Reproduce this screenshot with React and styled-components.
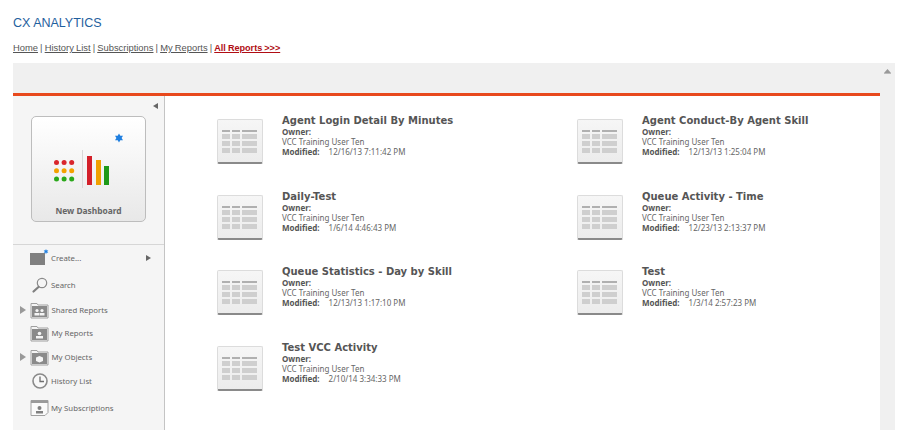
import React from "react";
import styled, { createGlobalStyle } from "styled-components";

const Global = createGlobalStyle`
  html, body { margin: 0; padding: 0; background: #fff; height: 430px; overflow: hidden; }
  #root { height: 430px; }
`;

const Page = styled.div`
  height: 430px;
  padding: 0 5px 0 13px;
  display: flex;
  flex-direction: column;
  font-family: "Liberation Sans", Arial, sans-serif;
  overflow: hidden;
`;
const Title = styled.h1`
  margin: 15px 0 0;
  font-size: 12.5px;
  line-height: 16px;
  font-weight: 400;
  color: #1f5f9e;
`;
const Nav = styled.nav`
  margin-top: 10px;
  height: 22px;
  font-size: 9.4px;
  line-height: 14px;
  word-spacing: -0.5px;
  color: #555;
`;
const NavLink = styled.a`
  color: ${p => (p.$hot ? "#b00d14" : "#555")};
  font-weight: ${p => (p.$hot ? 700 : 400)};
  font-size: ${p => (p.$hot ? "9.1px" : "inherit")};
  text-decoration: underline;
`;
const Shell = styled.div`
  flex: 1;
  min-height: 0;
  display: grid;
  grid-template-columns: 1fr 15px;
  background: #fff;
`;
const Main = styled.div`
  display: flex;
  flex-direction: column;
  min-width: 0;
`;
const TopBand = styled.div`
  height: 30px;
  background: #f0f0f0;
  border-bottom: 3px solid #e8491d;
`;
const Body = styled.div`
  flex: 1;
  display: grid;
  grid-template-columns: 152px 1fr;
  min-height: 0;
`;
const ScrollTrack = styled.div`
  background: #f0f0f0;
  display: flex;
  justify-content: center;
  padding-top: 6px;
`;
const Sidebar = styled.aside`
  position: relative;
  background: #f5f5f5;
  border-right: 1px solid #c4c4c4;
  display: flex;
  flex-direction: column;
`;
const CollapseArrow = styled.span`
  position: absolute;
  top: 7px;
  right: 6px;
  width: 0;
  height: 0;
  border-top: 3px solid transparent;
  border-bottom: 3px solid transparent;
  border-right: 5px solid #666;
`;
const Tile = styled.div`
  margin: 20px 0 0 18px;
  width: 115px;
  height: 106px;
  box-sizing: border-box;
  border: 1px solid #bdbdbd;
  border-radius: 5px;
  background: linear-gradient(#fff, #e8e8e8);
  display: flex;
  flex-direction: column;
  align-items: center;
  position: relative;
`;
const TileIcon = styled.svg`
  position: absolute;
  left: 0;
  top: 0;
`;
const TileLabel = styled.div`
  margin-top: auto;
  margin-bottom: 4px;
  font-family: "Noto Sans", sans-serif;
  font-weight: 700;
  font-size: 8.4px;
  line-height: 12px;
  color: #666;
`;
const Divider = styled.div`
  margin-top: 22px;
  height: 1px;
  background: #d6d6d6;
`;
const Menu = styled.ul`
  list-style: none;
  margin: 0;
  padding: 0;
`;
const MenuRow = styled.li`
  position: relative;
  height: ${p => p.$h}px;
  display: flex;
  align-items: center;
  padding-left: 16px;
  font-family: "Noto Sans", sans-serif;
  font-size: 7.8px;
  color: #666;
`;
const IconSlot = styled.span`
  width: 22px;
  height: 20px;
  margin-right: ${p => p.$gap}px;
  display: flex;
  align-items: center;
  justify-content: center;
  flex: none;
`;
const LeftCaret = styled.span`
  position: absolute;
  left: 7px;
  top: 50%;
  margin-top: -4px;
  width: 0;
  height: 0;
  border-top: 4px solid transparent;
  border-bottom: 4px solid transparent;
  border-left: 6px solid #999;
`;
const RightCaret = styled.span`
  position: absolute;
  left: 133px;
  top: 50%;
  margin-top: -3px;
  width: 0;
  height: 0;
  border-top: 3px solid transparent;
  border-bottom: 3px solid transparent;
  border-left: 5px solid #666;
`;
const Content = styled.main`
  padding: 16px 0 0 52px;
  display: grid;
  grid-template-columns: 360px 1fr;
  grid-auto-rows: 75.5px;
  align-content: start;
`;
const Card = styled.article`
  display: flex;
  align-items: flex-start;
`;
const Thumb = styled.div`
  width: 46px;
  height: 45px;
  margin-top: 7px;
  box-sizing: border-box;
  border: 1px solid #dcdcdc;
  border-bottom: 2px solid #8a8a8a;
  border-radius: 2px;
  background: linear-gradient(#f6f6f6, #ececec);
  display: grid;
  grid-template-columns: 8px 8px 15px;
  grid-template-rows: 2px repeat(3, 5px);
  gap: 2px;
  padding: 10px 0 0 4px;
  flex: none;
`;
const Cell = styled.i`
  display: block;
  background: ${p => (p.$head ? "#b0b0b0" : "#cfcfcf")};
`;
const Info = styled.div`
  margin-left: 19px;
  font-family: "Noto Sans", sans-serif;
  font-size: 8px;
  line-height: 10px;
  color: #666;
`;
const CardTitle = styled.h2`
  margin: 3px 0 0;
  font-family: "DejaVu Sans", sans-serif;
  font-size: 10px;
  line-height: 12px;
  font-weight: 700;
  color: #555;
`;
const Label = styled.div`
  font-weight: 700;
  color: #555;
`;
const Modified = styled.div`
  display: flex;
  gap: 9px;
`;

const items = [
  ["Agent Login Detail By Minutes", "12/16/13 7:11:42 PM"],
  ["Agent Conduct-By Agent Skill", "12/13/13 1:25:04 PM"],
  ["Daily-Test", "1/6/14 4:46:43 PM"],
  ["Queue Activity - Time", "12/23/13 2:13:37 PM"],
  ["Queue Statistics - Day by Skill", "12/13/13 1:17:10 PM"],
  ["Test", "1/3/14 2:57:23 PM"],
  ["Test VCC Activity", "2/10/14 3:34:33 PM"],
];

const FolderIcon = ({ children }) => (
  <svg width="22" height="20" viewBox="0 0 22 20">
    <path d="M2 3.500h6l1 1.500h10v13H2z" fill="#f4f4f4" stroke="#a0a0a0" />
    <rect x="3" y="6" width="15" height="11" fill="#8a8a8a" />
    {children}
  </svg>
);

const Person = () => (
  <g fill="#f4f4f4">
    <circle cx="10.5" cy="10.500" r="1.800" />
    <rect x="7" y="13" width="7" height="2.500" />
  </g>
);

const menu = [
  { label: "Create...", h: 26, gap: 0, right: true, icon: (
    <svg width="22" height="20" viewBox="0 0 22 20">
      <rect x="1" y="5" width="15" height="12" fill="#808080" />
      <path d="M17 1l.7 1.600 1.600-.4-1 1.400 1 1.400-1.600-.4-.7 1.600-.7-1.600-1.600.4 1-1.400-1-1.400 1.600.4z" fill="#1f7fe0" />
    </svg>
  ) },
  { label: "Search", h: 28, gap: 0, icon: (
    <svg width="22" height="20" viewBox="0 0 22 20">
      <circle cx="13" cy="8" r="4.700" fill="none" stroke="#8a8a8a" strokeWidth="1.200" />
      <path d="M9.500 12L4.500 16.500" stroke="#808080" strokeWidth="2.200" strokeLinecap="round" />
    </svg>
  ) },
  { label: "Shared Reports", h: 22, gap: 0.500, left: true, icon: (
    <FolderIcon>
      <g fill="#f4f4f4">
        <circle cx="8" cy="10.500" r="1.600" /><circle cx="13" cy="10.500" r="1.600" />
        <rect x="5.500" y="13" width="5" height="2.500" /><rect x="11" y="13" width="4.500" height="2.500" />
      </g>
    </FolderIcon>
  ) },
  { label: "My Reports", h: 24, gap: 0.500, icon: <FolderIcon><Person /></FolderIcon> },
  { label: "My Objects", h: 24, gap: 0.500, left: true, icon: (
    <FolderIcon>
      <path d="M10.500 9l3.500 1.500v3.500l-3.500 1.500-3.500-1.500v-3.500z" fill="#f4f4f4" />
    </FolderIcon>
  ) },
  { label: "History List", h: 24, gap: 0, icon: (
    <svg width="22" height="20" viewBox="0 0 22 20">
      <circle cx="11" cy="10" r="7" fill="#f8f8f8" stroke="#8a8a8a" strokeWidth="1.600" />
      <path d="M11 5.500V10.500H15" fill="none" stroke="#6e6e6e" strokeWidth="1.300" />
    </svg>
  ) },
  { label: "My Subscriptions", h: 30, gap: 0, icon: (
    <svg width="22" height="20" viewBox="0 0 22 20">
      <path d="M2 2.500h17v12l-3 3H2z" fill="#fafafa" stroke="#a0a0a0" />
      <rect x="2" y="2.500" width="17" height="2.500" fill="#9a9a9a" />
      <circle cx="10.500" cy="10" r="2" fill="#808080" />
      <rect x="7" y="13" width="7" height="2.500" fill="#808080" />
    </svg>
  ) },
];

export default function App() {
  return (
    <Page>
      <Global />
      <Title>CX ANALYTICS</Title>
      <Nav>
        <NavLink>Home</NavLink> | <NavLink>History List</NavLink> | <NavLink>Subscriptions</NavLink> | <NavLink>My Reports</NavLink> | <NavLink $hot>All Reports &gt;&gt;&gt;</NavLink>
      </Nav>
      <Shell>
        <Main>
          <TopBand />
          <Body>
            <Sidebar>
              <CollapseArrow />
              <Tile>
                <TileIcon width="113" height="90" viewBox="0 0 113 90">
                  <path d="M87 16.500l1.300 2.300 2.700-.1-1.400 2.300 1.400 2.300-2.700-.1L87 25.500l-1.300-2.300-2.700.1 1.400-2.300-1.400-2.300 2.700.1z" fill="#1f7fe0" />
                  {[0, 1, 2].map(r => [0, 1, 2].map(c => (
                    <circle key={`${r}${c}`} cx={24.500 + c * 7.600} cy={45.500 + r * 8.300} r="2.500" fill={["#d9262c", "#f3a100", "#2aa81a"][r]} />
                  )))}
                  <rect x="50" y="33" width="1" height="38" fill="#d8d8d8" />
                  <rect x="55" y="39" width="5" height="29" fill="#d3202a" />
                  <rect x="64" y="43" width="5" height="25" fill="#f0a000" />
                  <rect x="72" y="49" width="5" height="19" fill="#1f9a1a" />
                </TileIcon>
                <TileLabel>New Dashboard</TileLabel>
              </Tile>
              <Divider />
              <Menu>
                {menu.map(m => (
                  <MenuRow key={m.label} $h={m.h}>
                    {m.left && <LeftCaret />}
                    <IconSlot $gap={m.gap}>{m.icon}</IconSlot>
                    {m.label}
                    {m.right && <RightCaret />}
                  </MenuRow>
                ))}
              </Menu>
            </Sidebar>
            <Content>
              {items.map(([name, date]) => (
                <Card key={name}>
                  <Thumb>
                    {[...Array(12)].map((_, i) => <Cell key={i} $head={i < 3} />)}
                  </Thumb>
                  <Info>
                    <CardTitle>{name}</CardTitle>
                    <Label>Owner:</Label>
                    <div>VCC Training User Ten</div>
                    <Modified><Label>Modified:</Label>{date}</Modified>
                  </Info>
                </Card>
              ))}
            </Content>
          </Body>
        </Main>
        <ScrollTrack>
          <svg width="7" height="6" viewBox="0 0 7 6"><path d="M3.500 0L7 4H0z" fill="#999" /><rect x="0" y="4" width="7" height="1" fill="#bbb" /></svg>
        </ScrollTrack>
      </Shell>
    </Page>
  );
}
